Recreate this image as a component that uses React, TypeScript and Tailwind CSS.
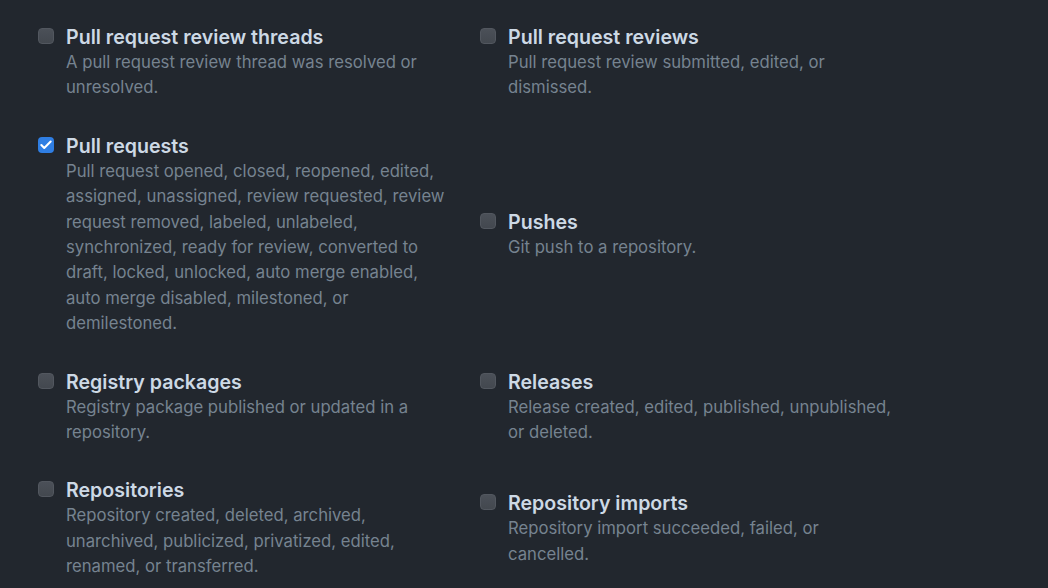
import { Check } from 'lucide-react';

interface EventOption {
    title: string;
    description: string;
    checked?: boolean;
}

const events: EventOption[] = [
    {
        title: 'Pull request review threads',
        description: 'A pull request review thread was resolved or unresolved.',
    },
    {
        title: 'Pull request reviews',
        description: 'Pull request review submitted, edited, or dismissed.',
    },
    {
        title: 'Pull requests',
        description:
            'Pull request opened, closed, reopened, edited, assigned, unassigned, review requested, review request removed, labeled, unlabeled, synchronized, ready for review, converted to draft, locked, unlocked, auto merge enabled, auto merge disabled, milestoned, or demilestoned.',
        checked: true,
    },
    {
        title: 'Pushes',
        description: 'Git push to a repository.',
    },
    {
        title: 'Registry packages',
        description: 'Registry package published or updated in a repository.',
    },
    {
        title: 'Releases',
        description: 'Release created, edited, published, unpublished, or deleted.',
    },
    {
        title: 'Repositories',
        description:
            'Repository created, deleted, archived, unarchived, publicized, privatized, edited, renamed, or transferred.',
    },
    {
        title: 'Repository imports',
        description: 'Repository import succeeded, failed, or cancelled.',
    },
];

function Checkbox({ checked }: { checked?: boolean }) {
    if (checked) {
        return (
            <span className="mt-[4px] flex h-4 w-4 flex-shrink-0 items-center justify-center rounded-[4px] bg-[#2f7ee3]">
                <Check className="h-3.5 w-3.5 text-white" strokeWidth={3.5} />
            </span>
        );
    }
    return (
        <span className="mt-[4px] block h-4 w-4 flex-shrink-0 rounded-[4px] border border-[#52575f] bg-gradient-to-b from-[#4b5058] to-[#43484f]" />
    );
}

export default function App() {
    return (
        <div
            className="min-h-[588px] w-full bg-[#22272e] pl-[38px] pt-[24px]"
            style={{ fontFamily: 'Inter, "Noto Sans", sans-serif' }}
        >
            <div className="grid grid-cols-[442px_442px] items-center gap-y-[32px]">
                {events.map((ev) => (
                    <label key={ev.title} className="flex items-start gap-[12px]">
                        <Checkbox checked={ev.checked} />
                        <div className="max-w-[387px]">
                            <div className="text-[19.6px] font-semibold leading-[26px] text-[#cdd9e5]">
                                {ev.title}
                            </div>
                            <p className="text-[16.7px] leading-[25.4px] text-[#768390]">
                                {ev.description}
                            </p>
                        </div>
                    </label>
                ))}
            </div>
        </div>
    );
}
